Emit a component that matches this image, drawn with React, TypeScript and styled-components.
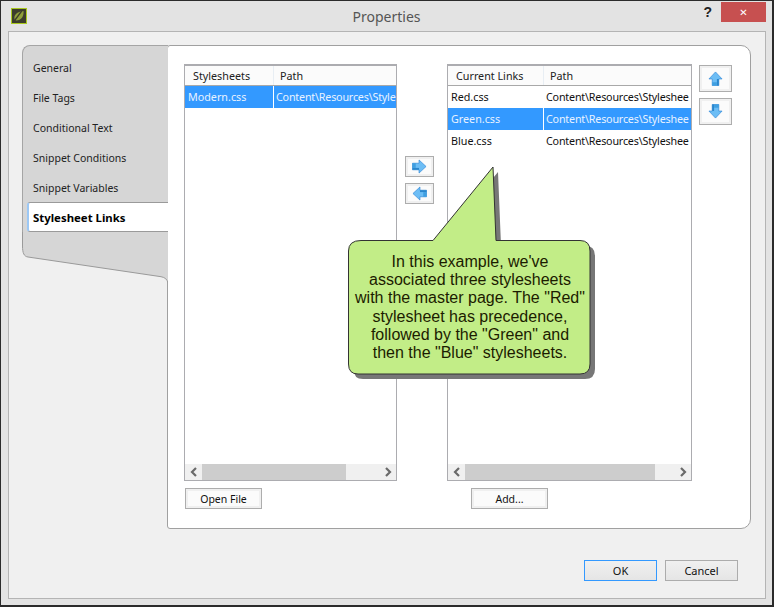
import styled, { createGlobalStyle } from "styled-components";

const GlobalStyle = createGlobalStyle`
  html, body {
    margin: 0;
    padding: 0;
    background: #e3e3e3;
  }
  * {
    box-sizing: border-box;
  }
`;

const tabs = [
  "General",
  "File Tags",
  "Conditional Text",
  "Snippet Conditions",
  "Snippet Variables",
];

function ArrowIcon({ dir, size }: { dir: "up" | "down" | "left" | "right"; size: number }) {
  const angle = { up: 0, right: 90, down: 180, left: 270 }[dir];
  // the shaft is darker on the side away from the head, as in the bitmap icons
  return (
    <svg width={size} height={size} viewBox="0 0 16 16">
      <g transform={`rotate(${angle} 8 8)`}>
        <path d="M8 1 L15 8.5 L11.5 8.5 L11.5 15.5 L4.5 15.5 L4.5 8.5 L1 8.5 Z" fill="#6cbdf5" stroke="#2f86d8" strokeWidth="0.7" strokeLinejoin="round" />
        <path d="M9.5 8.5 H11.5 V15.5 H9.5 Z" fill="#2a86cc" />
        <path d="M4.5 12 H9.5 V15.5 H4.5 Z" fill="#3f9fe0" />
      </g>
    </svg>
  );
}

function Logo() {
  return (
    <svg width="16" height="16" viewBox="0 0 16 16">
      <rect x="0.5" y="0.5" width="15" height="15" fill="#3d3d2c" stroke="#a9c81e" />
      <path d="M3.5 11.5 C2.5 7 6 3.5 12.5 3 C13 8 10.5 12.5 5 12.5 Z" fill="#8f9f3a" />
      <path d="M2.5 14 L11.5 2" stroke="#3d3d2c" strokeWidth="1.3" />
    </svg>
  );
}

function Chevron({ flip }: { flip?: boolean }) {
  return (
    <svg width="8" height="10" viewBox="0 0 8 10">
      <path
        d={flip ? "M2 1 L6 5 L2 9" : "M6 1 L2 5 L6 9"}
        fill="none"
        stroke="#6a6a6a"
        strokeWidth="2.2"
      />
    </svg>
  );
}

function TabTail() {
  return (
    <svg width="146" height="54" viewBox="0 0 146 54">
      <path d="M0.5 0 V14 C0.5 21 2 24.5 6 25 L139 44.7 C143 45.5 145 47 146 51 V0 Z" fill="#d6d6d6" />
      <path d="M0.5 0 V14 C0.5 21 2 24.5 6 25 L139 44.7 C143 45.5 145 47 146 51" fill="none" stroke="#9a9a9a" />
    </svg>
  );
}

function ListBox({
  title,
  rows,
  selected,
  nameWidth,
  thumbWidth,
}: {
  title: string;
  rows: [string, string][];
  selected: number;
  nameWidth: number;
  thumbWidth: number;
}) {
  return (
    <List>
      <ListHead>
        <HeadCell $width={nameWidth}>{title}</HeadCell>
        <HeadCell>Path</HeadCell>
      </ListHead>
      <ListRows>
        {rows.map((row, i) => (
          <Row key={row[0]} $selected={i === selected}>
            <NameCell $width={nameWidth}>{row[0]}</NameCell>
            <PathCell>{row[1]}</PathCell>
          </Row>
        ))}
      </ListRows>
      <ScrollBar>
        <ScrollArrow>
          <Chevron />
        </ScrollArrow>
        <Track>
          <Thumb $width={thumbWidth} />
        </Track>
        <ScrollArrow>
          <Chevron flip />
        </ScrollArrow>
      </ScrollBar>
    </List>
  );
}

function App() {
  return (
    <>
      <GlobalStyle />
      <Wrapper>
        <TitleBar>
          <LogoSlot>
            <Logo />
          </LogoSlot>
          <Title>Properties</Title>
          <Help>?</Help>
          <CloseButton>✕</CloseButton>
        </TitleBar>
        <Body>
          <Main>
            <TabColumn>
              <TabList>
                {tabs.map((t) => (
                  <Tab key={t}>{t}</Tab>
                ))}
                <ActiveTab>Stylesheet Links</ActiveTab>
              </TabList>
              <TabTail />
            </TabColumn>
            <Content>
              <LeftGroup>
                <ListBox
                  title="Stylesheets"
                  nameWidth={89}
                  selected={0}
                  rows={[["Modern.css", "Content\\Resources\\Style"]]}
                  thumbWidth={144}
                />
                <ActionButton>Open File</ActionButton>
              </LeftGroup>
              <MoveColumn>
                <IconButton $w={29} $h={21}>
                  <ArrowIcon dir="right" size={15} />
                </IconButton>
                <IconButton $w={29} $h={21}>
                  <ArrowIcon dir="left" size={15} />
                </IconButton>
              </MoveColumn>
              <RightGroup>
                <ListBox
                  title="Current Links"
                  nameWidth={96}
                  selected={1}
                  rows={[
                    ["Red.css", "Content\\Resources\\Styleshee"],
                    ["Green.css", "Content\\Resources\\Styleshee"],
                    ["Blue.css", "Content\\Resources\\Styleshee"],
                  ]}
                  thumbWidth={190}
                />
                <AddButton>Add...</AddButton>
              </RightGroup>
              <OrderColumn>
                <IconButton $w={33} $h={27}>
                  <ArrowIcon dir="up" size={15} />
                </IconButton>
                <IconButton $w={33} $h={27}>
                  <ArrowIcon dir="down" size={15} />
                </IconButton>
              </OrderColumn>
            </Content>
          </Main>
          <Footer>
            <FooterButton $primary>OK</FooterButton>
            <FooterButton>Cancel</FooterButton>
          </Footer>
        </Body>
        <Callout>
          <svg width="252" height="218" viewBox="0 0 252 218">
            <path
              d="M14 75.5 H86 L146 2 L149 75.5 H233 Q243 75.5 243 86 V199 Q243 209 233 209 H11 Q1.5 209 1.5 199 V86 Q1.5 75.5 14 75.5 Z"
              transform="translate(5 5)"
              fill="#777"
            />
            <path
              d="M14 75.5 H86 L146 2 L149 75.5 H233 Q243 75.5 243 86 V199 Q243 209 233 209 H11 Q1.5 209 1.5 199 V86 Q1.5 75.5 14 75.5 Z"
              fill="#c2ed87"
              stroke="#333"
            />
          </svg>
          <CalloutText>
            In this example, we've
            <br />
            associated three stylesheets
            <br />
            with the master page. The "Red"
            <br />
            stylesheet has precedence,
            <br />
            followed by the "Green" and
            <br />
            then the "Blue" stylesheets.
          </CalloutText>
        </Callout>
      </Wrapper>
    </>
  );
}

export default App;

const Wrapper = styled.div`
  position: relative;
  width: 774px;
  height: 607px;
  background: #e3e3e3;
  border: 1px solid #2b2b2b;
  border-width: 1px 2px 2px 1px;
  overflow: hidden;
  display: flex;
  flex-direction: column;
  font-family: "Noto Sans", sans-serif;
  font-size: 10.75px;
  color: #111;
`;

const TitleBar = styled.div`
  height: 30px;
  display: flex;
  align-items: flex-start;
  position: relative;
  flex-shrink: 0;
`;

const LogoSlot = styled.div`
  padding: 7px 0 0 10px;
`;

const Title = styled.div`
  position: absolute;
  left: 0;
  right: 0;
  top: 6px;
  text-align: center;
  font-size: 14px;
  line-height: 19px;
  color: #555;
`;

const Help = styled.div`
  margin-left: auto;
  margin-right: 9px;
  margin-top: 3px;
  font-family: "Liberation Sans", sans-serif;
  font-size: 14px;
  font-weight: bold;
  color: #222;
`;

const CloseButton = styled.div`
  width: 45px;
  height: 20px;
  margin-top: 1px;
  margin-right: 6px;
  background: #c75050;
  color: #fff;
  font-family: "DejaVu Sans", sans-serif;
  font-size: 10px;
  font-weight: bold;
  display: flex;
  align-items: center;
  justify-content: center;
`;

const Body = styled.div`
  margin: 0 6px 6px 7px;
  flex: 1;
  background: #f0f0f0;
  border: 1px solid #b4b4b4;
  padding: 13px 14px 0 13px;
  display: flex;
  flex-direction: column;
`;

const Main = styled.div`
  display: flex;
  height: 484px;
`;

const TabColumn = styled.div`
  width: 146px;
  display: flex;
  flex-direction: column;
  flex-shrink: 0;
  position: relative;
  z-index: 1;
`;

const TabList = styled.div`
  background: #d6d6d6;
  border: 1px solid #a5a5a5;
  border-width: 1px 0 0 1px;
  border-top-left-radius: 8px;
  padding-top: 7px;
  display: flex;
  flex-direction: column;
`;

const Tab = styled.div`
  height: 30px;
  padding-left: 10px;
  line-height: 30px;
  font-size: 10.5px;
  color: #222;
`;

const ActiveTab = styled.div`
  height: 30px;
  margin: -1px 0 0 4px;
  padding-left: 4px;
  line-height: 30px;
  font-size: 11.4px;
  font-weight: bold;
  color: #000;
  background: #fff;
  border: 1px solid #9a9a9a;
  border-width: 1px 0 1px 0;
  border-left: 2px solid #9cc8f5;
  border-radius: 3px 0 0 3px;
`;

const Content = styled.div`
  flex: 1;
  margin-left: -1px;
  background: #fff;
  border: 1px solid #a0a0a0;
  border-radius: 3px 10px 10px 3px;
  padding: 18px 18px 0 16px;
  display: flex;
  align-items: flex-start;
`;

const LeftGroup = styled.div`
  width: 213px;
  display: flex;
  flex-direction: column;
  align-items: flex-start;
`;

const RightGroup = styled.div`
  width: 245px;
  display: flex;
  flex-direction: column;
  align-items: flex-start;
`;

const List = styled.div`
  width: 100%;
  height: 417px;
  border: 1px solid #acacb0;
  border-top: 2px solid #acacb0;
  display: flex;
  flex-direction: column;
`;

const ListHead = styled.div`
  height: 20px;
  background: #fbfbfb;
  border-bottom: 1px solid #a8a8a8;
  display: flex;
  flex-shrink: 0;
`;

const HeadCell = styled.div<{ $width?: number }>`
  width: ${(p) => (p.$width ? `${p.$width}px` : "auto")};
  padding-left: ${(p) => (p.$width ? "8px" : "6px")};
  line-height: 20px;
  border-right: ${(p) => (p.$width ? "1px solid #e8eef4" : "none")};
  color: #222;
`;

const ListRows = styled.div`
  flex: 1;
  overflow: hidden;
`;

const Row = styled.div<{ $selected: boolean }>`
  height: 22px;
  display: flex;
  line-height: 22px;
  background: ${(p) => (p.$selected ? "#3399ff" : "#fff")};
  color: ${(p) => (p.$selected ? "#e8f2ff" : "#111")};
`;

const NameCell = styled.div<{ $width: number }>`
  width: ${(p) => p.$width}px;
  padding-left: 3px;
  flex-shrink: 0;
  border-right: 1px solid #fff;
`;

const PathCell = styled.div`
  padding-left: 2px;
  white-space: nowrap;
  letter-spacing: -0.2px;
  flex: 1;
`;

const ScrollBar = styled.div`
  height: 16px;
  background: #f0f0f0;
  display: flex;
  flex-shrink: 0;
`;

const ScrollArrow = styled.div`
  width: 17px;
  display: flex;
  align-items: center;
  justify-content: center;
`;

const Track = styled.div`
  flex: 1;
  display: flex;
`;

const Thumb = styled.div<{ $width: number }>`
  width: ${(p) => p.$width}px;
  background: #cdcdcd;
`;

const ActionButton = styled.div`
  margin: 7px 0 0 1px;
  width: 77px;
  height: 21px;
  background: #fbfbfb;
  border: 1px solid #adadad;
  box-shadow: inset 0 0 0 2px #f0f0f0;
  text-align: center;
  line-height: 20px;
  font-size: 10.5px;
`;

const AddButton = styled(ActionButton)`
  margin-left: 24px;
`;

const MoveColumn = styled.div`
  width: 50px;
  padding: 92px 0 0 8px;
  display: flex;
  flex-direction: column;
  gap: 6px;
`;

const OrderColumn = styled.div`
  padding: 1px 0 0 7px;
  display: flex;
  flex-direction: column;
  gap: 6px;
`;

const IconButton = styled.div<{ $w: number; $h: number }>`
  width: ${(p) => p.$w}px;
  height: ${(p) => p.$h}px;
  background: #fbfbfb;
  border: 1px solid #adadad;
  box-shadow: inset 0 0 0 2px #f0f0f0;
  display: flex;
  align-items: center;
  justify-content: center;
`;

const Footer = styled.div`
  flex: 1;
  display: flex;
  justify-content: flex-end;
  gap: 8px;
  padding: 31px 13px 0 0;
`;

const FooterButton = styled.div<{ $primary?: boolean }>`
  width: 73px;
  height: 21px;
  background: linear-gradient(#f0f0f0, #e5e5e5);
  border: 1px solid ${(p) => (p.$primary ? "#3399ff" : "#acacac")};
  text-align: center;
  line-height: 20px;
  font-size: 11px;
`;

const Callout = styled.div`
  position: absolute;
  left: 346px;
  top: 164px;
  z-index: 2;
  width: 252px;
  height: 218px;
`;

const CalloutText = styled.div`
  position: absolute;
  left: 0;
  top: 88px;
  width: 246px;
  text-align: center;
  font-family: "Liberation Sans", sans-serif;
  font-size: 16px;
  line-height: 18.2px;
  color: #1c1c00;
`;
